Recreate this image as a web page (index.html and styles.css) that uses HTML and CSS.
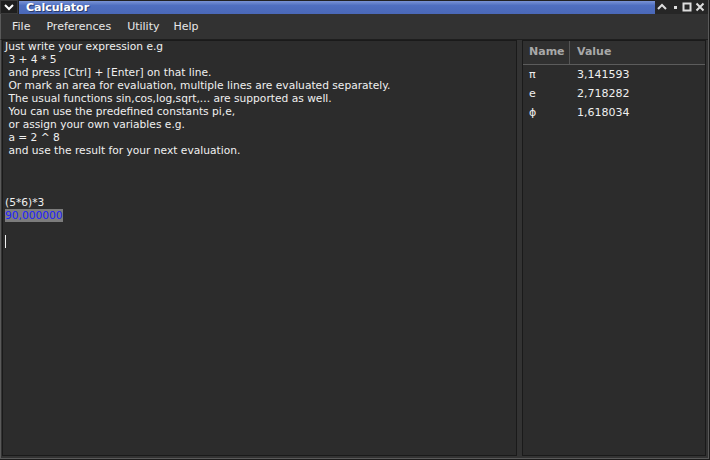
FILE: index.html
```html
<!DOCTYPE html>
<html>
<head>
<meta charset="utf-8">
<link rel="stylesheet" href="styles.css">
</head>
<body>
<div class="window">
  <div class="titlebar">
    <div class="tb-menu"><svg width="10" height="8" viewBox="0 0 10 8"><path d="M1 2 L5 6 L9 2" fill="none" stroke="#fff" stroke-width="2"/></svg></div>
    <div class="tb-title">Calculator</div>
    <div class="tb-buttons">
      <svg width="10" height="10" viewBox="0 0 10 10"><path d="M1 7 L5 3 L9 7" fill="none" stroke="#ddd" stroke-width="2"/></svg>
      <svg width="10" height="10" viewBox="0 0 10 10"><rect x="4" y="4" width="3" height="3" fill="#ddd"/></svg>
      <svg width="10" height="10" viewBox="0 0 10 10"><rect x="1.5" y="1.5" width="7" height="7" fill="none" stroke="#ddd" stroke-width="2"/></svg>
      <svg width="10" height="10" viewBox="0 0 10 10"><path d="M1.5 1.5 L8.5 8.5 M8.5 1.5 L1.5 8.5" fill="none" stroke="#ddd" stroke-width="2"/></svg>
    </div>
  </div>
  <div class="menubar">
    <span class="menu-item">File</span>
    <span class="menu-item">Preferences</span>
    <span class="menu-item">Utility</span>
    <span class="menu-item">Help</span>
  </div>
  <div class="content">
    <div class="editor">
      <div class="line">Just write your expression e.g</div>
      <div class="line"> 3 + 4 * 5</div>
      <div class="line"> and press [Ctrl] + [Enter] on that line.</div>
      <div class="line"> Or mark an area for evaluation, multiple lines are evaluated separately.</div>
      <div class="line"> The usual functions sin,cos,log,sqrt,... are supported as well.</div>
      <div class="line"> You can use the predefined constants pi,e,</div>
      <div class="line"> or assign your own variables e.g.</div>
      <div class="line"> a = 2 ^ 8</div>
      <div class="line"> and use the result for your next evaluation.</div>
      <div class="line"></div>
      <div class="line"></div>
      <div class="line"></div>
      <div class="line">(5*6)*3</div>
      <div class="line"><span class="result">90,000000</span></div>
      <div class="line"></div>
      <div class="line"><span class="cursor"></span></div>
    </div>
    <div class="splitter"></div>
    <div class="vars">
      <div class="vars-head">
        <div class="col-name">Name</div>
        <div class="col-value">Value</div>
      </div>
      <div class="vars-row"><div class="col-name">π</div><div class="col-value">3,141593</div></div>
      <div class="vars-row"><div class="col-name">e</div><div class="col-value">2,718282</div></div>
      <div class="vars-row"><div class="col-name">ϕ</div><div class="col-value">1,618034</div></div>
    </div>
  </div>
</div>
</body>
</html>
```
FILE: styles.css
```css
html, body {
  margin: 0;
  padding: 0;
  background: #1c1c1c;
}
body {
  width: 710px;
  height: 460px;
  overflow: hidden;
  font-family: "DejaVu Sans", sans-serif;
}
.window {
  width: 708px;
  height: 458px;
  border-right: 1px solid #5a5a5a;
  border-bottom: 1px solid #5a5a5a;
  background: #2e2e2e;
  display: flex;
  flex-direction: column;
  box-sizing: content-box;
}
.titlebar {
  height: 14px;
  display: flex;
  align-items: stretch;
  background: #222;
}
.tb-menu {
  width: 18px;
  display: flex;
  align-items: center;
  justify-content: center;
  background: #1e1e1e;
  border: 1px solid #3a3a3a;
  box-sizing: border-box;
}
.tb-title {
  flex: 1;
  background: linear-gradient(#7a94d6, #4f6fc0 35%, #4a68b8);
  color: #fff;
  font-weight: bold;
  font-size: 11px;
  line-height: 13px;
  padding-left: 7px;
  margin: 1px 0 0 1px;
  text-shadow: 1px 1px 0 #2a3a6a;
}
.tb-buttons {
  width: 50px;
  display: flex;
  align-items: center;
  justify-content: space-around;
  padding: 0 2px 0 1px;
  background: #262626;
}
.menubar {
  height: 25px;
  display: flex;
  align-items: center;
  background: #323232;
  border-left: 1px solid #5a5a5a;
  padding-left: 3px;
  box-sizing: border-box;
}
.menu-item {
  color: #e8e8e8;
  font-size: 11px;
  padding: 0 8px;
}
.menu-item:last-child {
  margin-left: -2px;
}
.content {
  flex: 1;
  display: flex;
  border-left: 1px solid #5a5a5a;
  border-top: 1px solid #1e1e1e;
  padding: 0 2px 2px 1px;
  min-height: 0;
  background: #333;
}
.editor {
  width: 515px;
  background: #2c2c2c;
  border: 1px solid #1a1a1a;
  padding: 0 2px;
  box-sizing: border-box;
  color: #f0f0f0;
  font-size: 10.667px;
  line-height: 13px;
  overflow: hidden;
}
.line {
  height: 13px;
  white-space: pre;
}
.line:first-child {
  margin-top: -1px;
}
.result {
  background: #7c7c7c;
  color: #1e1eff;
}
.cursor {
  display: inline-block;
  width: 1px;
  height: 13px;
  background: #f0f0f0;
  vertical-align: top;
}
.splitter {
  width: 5px;
  background: #333;
}
.vars {
  flex: 1;
  background: #2c2c2c;
  border: 1px solid #1a1a1a;
  color: #f0f0f0;
  font-size: 11px;
}
.vars-head {
  display: flex;
  height: 23px;
  align-items: center;
  border-bottom: 1px solid #5c5c5c;
  color: #a8a8a8;
  font-weight: bold;
  background: #303030;
}
.vars-head .col-name {
  border-right: 1px solid #555;
  height: 100%;
  display: flex;
  align-items: center;
  padding-bottom: 2px;
}
.vars-head .col-value {
  padding-bottom: 2px;
}
.col-name {
  width: 47px;
  padding-left: 6px;
  box-sizing: border-box;
}
.col-value {
  padding-left: 7px;
}
.vars-row {
  display: flex;
  height: 19px;
  align-items: center;
}
.vars-row:first-of-type {
  margin-top: 1px;
}
```
